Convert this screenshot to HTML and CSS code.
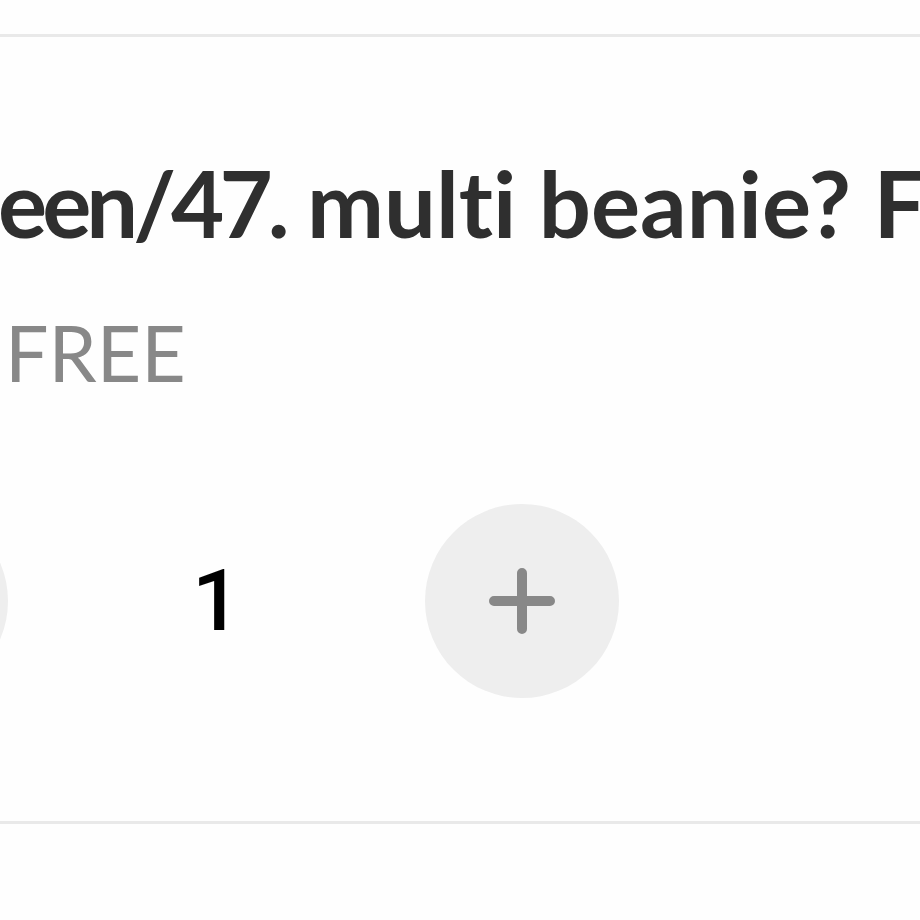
FILE: index.html
```html
<!DOCTYPE html>
<html lang="en">
<head>
    <meta charset="UTF-8">
    <meta name="viewport" content="width=device-width, initial-scale=1.0">
    <title>Cart</title>
    <link rel="stylesheet" href="styles.css">
</head>
<body>
    <div class="cart-item">
        <h2 class="item-name"><span class="item-code">een/47.</span> multi beanie? FREE</h2>
        <div class="item-price">FREE</div>

        <div class="qty">
            <button class="qty-btn minus" aria-label="Decrease">
                <svg viewBox="0 0 64 64" width="64" height="64"><path d="M2 32h60" /></svg>
            </button>
            <span class="qty-value">1</span>
            <button class="qty-btn plus" aria-label="Increase">
                <svg viewBox="0 0 66 66" width="66" height="66"><path d="M5 33h56M33 5v56" /></svg>
            </button>
        </div>
    </div>
</body>
</html>
```

FILE: styles.css
```css
body {
    margin: 0;
    background-color: #fefefe;
    font-family: Lato, "Open Sans", sans-serif;
    overflow: hidden;
}
.cart-item {
    margin-top: 34px;
    height: 790px;
    border-top: 3px solid #e9e9e9;
    border-bottom: 3px solid #e9e9e9;
    padding-top: 111px;
    box-sizing: border-box;
    white-space: nowrap;
}
.item-name {
    margin: 0;
    font-size: 92px;
    font-weight: 700;
    line-height: 1.2;
    color: #2f2f2f;
    font-variant-ligatures: none;
    margin-left: -2px;
}
.item-code {
    letter-spacing: -5px;
}
.item-price {
    margin-top: 48px;
    margin-left: 5px;
    font-size: 77px;
    line-height: 1.2;
    color: #888888;
}
.qty {
    display: flex;
    align-items: center;
    margin-top: 105px;
}
.qty-btn {
    width: 194px;
    height: 194px;
    flex: none;
    border: none;
    border-radius: 50%;
    background-color: #eeeeee;
    padding: 0;
    display: flex;
    align-items: center;
    justify-content: center;
}
.qty-btn svg {
    stroke: #888888;
    stroke-width: 10;
    stroke-linecap: round;
    fill: none;
}
.minus {
    margin-left: -186px;
}
.qty-value {
    width: 417px;
    text-align: center;
    font-family: Roboto, "Liberation Sans", sans-serif;
    font-weight: 500;
    font-size: 86px;
    color: #000000;
}
```
